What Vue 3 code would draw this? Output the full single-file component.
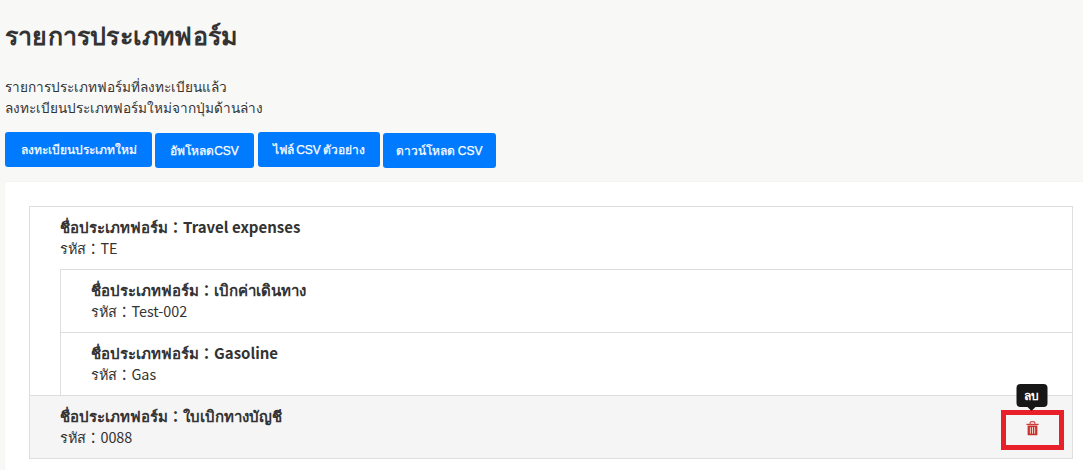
<template>
  <div class="page">
    <h1 class="title">รายการประเภทฟอร์ม</h1>
    <p class="desc">รายการประเภทฟอร์มที่ลงทะเบียนแล้ว<br />ลงทะเบียนประเภทฟอร์มใหม่จากปุ่มด้านล่าง</p>
    <div class="actions">
      <button v-for="b in buttons" :key="b" class="btn" type="button">{{ b }}</button>
    </div>
    <div class="card">
      <div class="tree">
        <div class="row">
          <div class="name">ชื่อประเภทฟอร์ม：<b>Travel expenses</b></div>
          <div class="code">รหัส：TE</div>
        </div>
        <div class="children">
          <div class="row child">
            <div class="name">ชื่อประเภทฟอร์ม：<b>เบิกค่าเดินทาง</b></div>
            <div class="code">รหัส：Test-002</div>
          </div>
          <div class="row child second">
            <div class="name">ชื่อประเภทฟอร์ม：<b>Gasoline</b></div>
            <div class="code">รหัส：Gas</div>
          </div>
        </div>
        <div class="row hovered">
          <div>
            <div class="name">ชื่อประเภทฟอร์ม：<b>ใบเบิกทางบัญชี</b></div>
            <div class="code">รหัส：0088</div>
          </div>
          <div class="marker">
            <div class="tip">ลบ</div>
            <svg class="trash" viewBox="0 0 16 16" width="15" height="15" aria-hidden="true">
              <path d="M1.500 3h13v1.200h-13z" fill="#c9302c" />
              <path d="M5.500 3V1.800a1 1 0 0 1 1-1h3a1 1 0 0 1 1 1V3" fill="none" stroke="#c9302c" stroke-width="1.200" />
              <path d="M2.800 4.800h10.400v9.200a1.300 1.300 0 0 1-1.300 1.300H4.100a1.300 1.300 0 0 1-1.300-1.300z" fill="#c9302c" />
              <path d="M5.700 6.500v7M8 6.500v7M10.300 6.500v7" stroke="#f6e0d8" stroke-width="1" />
            </svg>
          </div>
        </div>
      </div>
    </div>
  </div>
</template>

<script setup>
const buttons = ['ลงทะเบียนประเภทใหม่', 'อัพโหลดCSV', 'ไฟล์ CSV ตัวอย่าง', 'ดาวน์โหลด CSV']
</script>

<style>
html, body { margin: 0; background: #f8f8f6; overflow: hidden; }
</style>

<style scoped>
.page {
  height: 470px;
  box-sizing: border-box;
  padding: 20px 0 0 5px;
  font-family: "Liberation Sans", sans-serif;
  color: #333;
  font-size: 13.6px;
  overflow: hidden;
}
.title {
  margin: 0;
  font-size: 25px;
  line-height: 32px;
  font-weight: 700;
  letter-spacing: 0.2px;
  color: #333;
}
.desc {
  margin: 25px 0 0;
  line-height: 21px;
}
.actions {
  display: flex;
  align-items: flex-start;
  height: 36px;
  margin-top: 13px;
}
.btn {
  height: 35px;
  padding: 0;
  border: 0;
  border-radius: 3px;
  background: #007bff;
  color: #fff;
  font: 400 12px "Liberation Sans", sans-serif;
  -webkit-text-stroke: 0.25px #fff;
  word-spacing: -1px;
  white-space: nowrap;
}
.btn:nth-child(1) { width: 147px; margin-right: 3px; }
.btn:nth-child(2) { width: 99px; margin-right: 4px; margin-top: 1px; }
.btn:nth-child(3) { width: 122px; margin-right: 3px; }
.btn:nth-child(4) { width: 113px; margin-top: 1px; }
.card {
  margin-top: 14px;
  padding: 24px 10px 0 24px;
  background: #fff;
  border-radius: 3px 0 0 0;
  height: 300px;
  box-sizing: border-box;
  box-shadow: 0 0 2px rgba(0, 0, 0, 0.06);
}
.tree {
  border: 1px solid #dedede;
}
.row {
  padding: 9px 30px;
  height: 62px;
  box-sizing: border-box;
  line-height: 21px;
  font-family: "Noto Sans CJK JP", sans-serif;
  font-size: 14.4px;
}
.name { font-weight: 700; font-size: 15px; }
.name b { font-weight: 700; }
.children {
  margin-left: 30px;
  border-left: 1px solid #dedede;
}
.child { border-top: 1px solid #dedede; height: 63px; }
.hovered {
  display: flex;
  justify-content: space-between;
  background: #f5f5f5;
  border-top: 1px solid #dedede;
  height: 63px;
  position: relative;
}
.marker {
  position: absolute;
  right: 8px;
  top: 14px;
  width: 53px;
  height: 30px;
  border: 5px solid #e8202a;
  display: flex;
  align-items: center;
  justify-content: center;
}
.tip {
  position: absolute;
  left: 50%;
  top: -31px;
  margin-left: -1px;
  transform: translateX(-50%);
  width: 31px;
  height: 23px;
  border-radius: 4px;
  background: #171717;
  color: #fff;
  font-size: 12px;
  font-weight: 700;
  line-height: 22px;
  text-align: center;
}
.tip::after {
  content: "";
  position: absolute;
  left: 50%;
  bottom: -4px;
  margin-left: -4px;
  border: 4px solid transparent;
  border-top-color: #171717;
  border-bottom: 0;
}
.trash { display: block; margin-top: -3px; }
</style>
